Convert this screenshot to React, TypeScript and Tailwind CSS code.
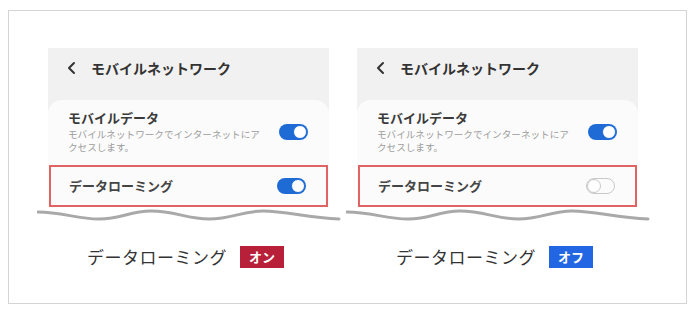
import React from "react";

const jp = { fontFamily: '"Noto Sans CJK JP", "Noto Sans", sans-serif' };

const Toggle = ({ on }: { on: boolean }) =>
  on ? (
    <div className="w-[29px] h-[16px] rounded-full bg-[#1f6bd6] flex items-center justify-end pr-[1px]">
      <div className="w-[14px] h-[14px] rounded-full bg-white border border-[#1f6bd6]" />
    </div>
  ) : (
    <div className="w-[29px] h-[16px] rounded-full border border-[#c9c9c9] flex items-center">
      <div className="w-[14px] h-[14px] rounded-full border border-[#c9c9c9] bg-white" />
    </div>
  );

const Chevron = () => (
  <svg width="9" height="14" viewBox="0 0 9 14" className="mr-[15px]">
    <path d="M7 2 L2 7 L7 12" fill="none" stroke="#333" strokeWidth="2" strokeLinecap="round" strokeLinejoin="round" />
  </svg>
);

const Wave = () => (
  <svg width="304" height="14" viewBox="0 0 304 14" className="-ml-[11px] -mt-[2px] block">
    <path
      d="M1 5 C 25 5, 40 12, 62 12 C 85 12, 92 4, 114 4 C 138 4, 150 12, 172 12 C 195 12, 205 4, 226 4 C 250 4, 270 11, 302 12"
      fill="none"
      stroke="#a9a9a9"
      strokeWidth="3"
      strokeLinecap="round"
    />
  </svg>
);

const Phone = ({ on }: { on: boolean }) => (
  <div className="w-[281px] flex flex-col">
    {/* header */}
    <div className="h-[52px] bg-[#f1f1f1] flex items-center pb-[12px] pl-[19px] text-[14px] font-semibold text-[#333]">
      <Chevron />
      <span>モバイルネットワーク</span>
    </div>
    {/* card */}
    <div className="bg-[#f1f1f1]">
      <div className="bg-[#fbfbfb] rounded-t-[14px] pt-[9px] flex flex-col">
        <div className="flex items-start pl-[20px] pr-[21px] h-[56px]">
          <div className="flex-1 flex flex-col">
            <div className="text-[13px] font-bold text-[#3a3a3a] leading-[18px] mb-[1px]">モバイルデータ</div>
            <div className="text-[9.6px] text-[#9c9c9c] leading-[13px] w-[200px]">
              モバイルネットワークでインターネットにアクセスします。
            </div>
          </div>
          <div className="mt-[15px]">
            <Toggle on />
          </div>
        </div>
        <div className="h-[42px] border-2 border-[#e06464] flex items-center justify-between pl-[18px] pr-[20px] mx-[1px]">
          <span className="text-[13px] font-bold text-[#444]">データローミング</span>
          <Toggle on={on} />
        </div>
        <div className="h-[2px] bg-white" />
      </div>
    </div>
    <Wave />
    {/* label */}
    <div className="flex items-center justify-center mt-[23px] pr-[6px]">
      <span className="text-[17px] text-[#333] tracking-[0.5px]">データローミング</span>
      <span
        className={
          on
            ? "ml-[13px] px-[9px] h-[22px] flex items-center bg-[#b8203a] text-white text-[13px] font-bold"
            : "ml-[13px] px-[9px] h-[22px] flex items-center bg-[#2266e3] text-white text-[13px] font-bold"
        }
      >
        {on ? "オン" : "オフ"}
      </span>
    </div>
  </div>
);

export default function App() {
  return (
    <div className="w-[700px] h-[318px] bg-white pt-[10px] pl-[8px]" style={jp}>
      <div className="w-[679px] h-[294px] border border-[#d4d4d4] flex pl-[39px] pt-[37px] gap-[28px]">
        <Phone on />
        <Phone on={false} />
      </div>
    </div>
  );
}
